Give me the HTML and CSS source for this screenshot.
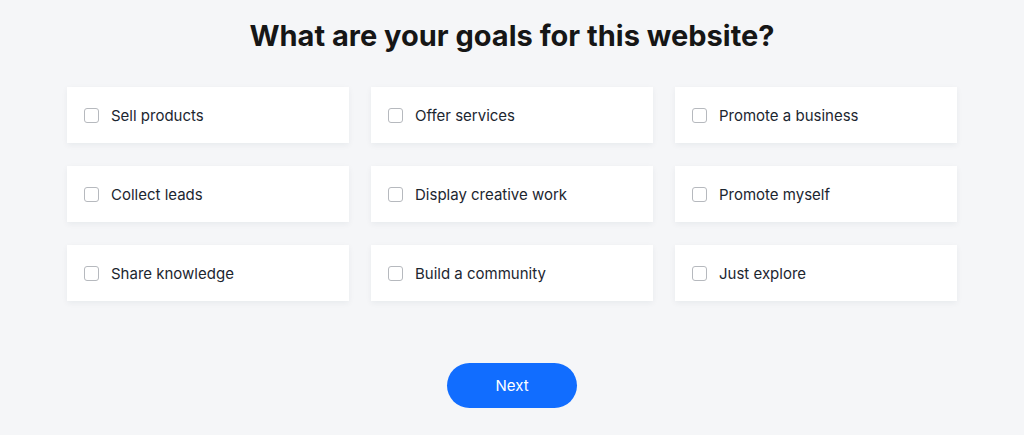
FILE: index.html
```html
<!DOCTYPE html>
<html lang="en">
<head>
    <meta charset="UTF-8">
    <meta name="viewport" content="width=device-width, initial-scale=1.0">
    <title>Website goals</title>
    <link rel="stylesheet" href="styles.css">
</head>
<body>
    <main class="page">
        <h1 class="title">What are your goals for this website?</h1>

        <div class="goals">
            <label class="goal"><span class="box"></span>Sell products</label>
            <label class="goal"><span class="box"></span>Offer services</label>
            <label class="goal"><span class="box"></span>Promote a business</label>
            <label class="goal"><span class="box"></span>Collect leads</label>
            <label class="goal"><span class="box"></span>Display creative work</label>
            <label class="goal"><span class="box"></span>Promote myself</label>
            <label class="goal"><span class="box"></span>Share knowledge</label>
            <label class="goal"><span class="box"></span>Build a community</label>
            <label class="goal"><span class="box"></span>Just explore</label>
        </div>

        <button class="next-button" type="button">Next</button>
    </main>
</body>
</html>
```

FILE: styles.css
```css
* {
    margin: 0;
    padding: 0;
    box-sizing: border-box;
}

body {
    font-family: Inter, "Noto Sans", sans-serif;
    background: #f5f6f8;
    color: #161616;
    height: 435px;
    overflow: hidden;
}

.page {
    display: flex;
    flex-direction: column;
    align-items: center;
    padding-top: 16px;
}

.title {
    font-size: 29px;
    font-weight: 700;
    line-height: 40px;
    margin-bottom: 31px;
}

.goals {
    display: grid;
    grid-template-columns: repeat(3, 282px);
    column-gap: 22px;
    row-gap: 23px;
}

.goal {
    height: 56px;
    background: #fff;
    display: flex;
    align-items: center;
    padding-left: 17px;
    font-size: 15px;
    color: #1c2630;
    box-shadow: 0 2px 6px rgba(22, 45, 61, 0.06);
    cursor: pointer;
}

.box {
    width: 15px;
    height: 15px;
    border: 1px solid #b6b9be;
    border-radius: 3px;
    margin-right: 12px;
}

.next-button {
    margin-top: 62px;
    width: 130px;
    height: 45px;
    border: none;
    border-radius: 23px;
    background: #116dff;
    color: #fff;
    font-family: Inter, "Noto Sans", sans-serif;
    font-size: 15px;
    font-weight: 400;
    cursor: pointer;
}
```
